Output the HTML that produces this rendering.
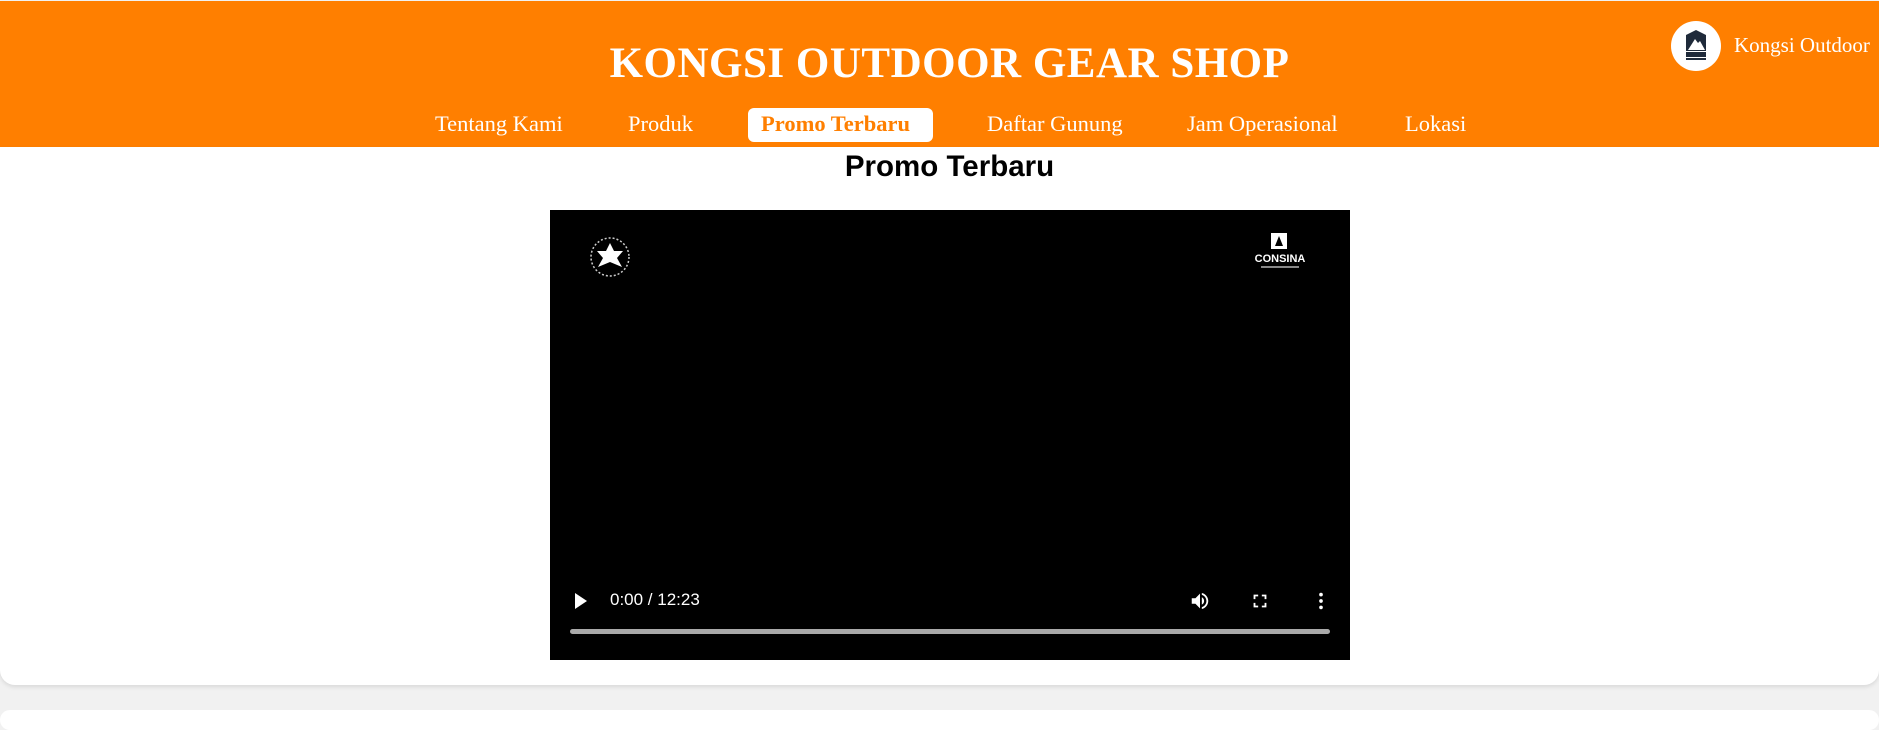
<!DOCTYPE html>
<html><head><meta charset="utf-8"><style>
html,body{margin:0;padding:0;width:1879px;height:715px;overflow:hidden;background:#f1f1f1;font-family:"Liberation Sans",sans-serif;}
.hdr{position:absolute;left:0;top:1px;width:1879px;height:146px;background:#ff7f00;}
.title{position:absolute;left:10px;width:1879px;top:38px;text-align:center;color:#fff;font-family:"Liberation Serif",serif;font-weight:bold;font-size:43px;letter-spacing:0.5px;}
.nav a{position:absolute;top:108px;color:#fff;font-family:"Liberation Serif",serif;font-size:22.5px;text-decoration:none;line-height:30px;}
.pill{position:absolute;left:748px;top:107px;width:185px;height:34px;background:#fff;border-radius:6px;}
.logo{position:absolute;left:1671px;top:20px;width:50px;height:50px;border-radius:50%;background:#fff;}
.brand{position:absolute;left:1734px;top:32px;color:#fff;font-family:"Liberation Serif",serif;font-size:21px;}
.card{position:absolute;left:0;top:147px;width:1879px;height:538px;background:#fff;border-radius:0 0 15px 15px;box-shadow:0 2px 4px rgba(0,0,0,.1);}
.card2{position:absolute;left:0;top:710px;width:1879px;height:20px;background:#fff;border-radius:15px;}
h2{position:absolute;left:10px;width:1879px;top:150px;margin:0;text-align:center;font-size:29.5px;font-weight:bold;color:#000;}
.vid{position:absolute;left:550px;top:210px;width:800px;height:450px;background:#000;}
.time{position:absolute;left:60px;top:380px;color:#fff;font-size:17px;}
.bar{position:absolute;left:20px;top:419px;width:760px;height:5px;background:#a9a9a9;border-radius:3px;}
</style></head><body>
<div class="hdr">
<div class="title">KONGSI OUTDOOR GEAR SHOP</div>
<div class="pill"></div>
<div class="nav">
<a style="left:435px">Tentang Kami</a>
<a style="left:628px">Produk</a>
<a style="left:761px;color:#ff7f00;font-weight:bold">Promo Terbaru</a>
<a style="left:987px">Daftar Gunung</a>
<a style="left:1187px">Jam Operasional</a>
<a style="left:1405px">Lokasi</a>
</div>
<div class="logo"><svg width="50" height="50" viewBox="0 0 50 50"><path d="M25 9 L35 14 L35 30 L15 30 L15 14 Z" fill="#1f2a3a"/><path d="M17 29 L24 18 L27 22 L29 20 L34 29Z" fill="#fff"/><rect x="15" y="31" width="20" height="5" fill="#1f2a3a"/><rect x="15" y="37" width="20" height="2" fill="#1f2a3a"/></svg></div>
<div class="brand">Kongsi Outdoor</div>
</div>
<div class="card"></div>
<div class="card2"></div>
<h2>Promo Terbaru</h2>
<div class="vid">
<svg style="position:absolute;left:38px;top:25px" width="44" height="44" viewBox="0 0 44 44"><circle cx="22" cy="22" r="19" fill="none" stroke="#ccc" stroke-width="1.5" stroke-dasharray="2 2"/><path d="M22 8 L26 16 L35 16 L29 23 L34 32 L22 27 L10 32 L15 23 L9 16 L18 16Z" fill="#fff"/></svg>
<svg style="position:absolute;left:705px;top:22px" width="50" height="42" viewBox="0 0 50 42"><rect x="16" y="1" width="16" height="16" fill="#fff"/><path d="M24 4 L28 14 L20 14Z" fill="#000"/><text x="25" y="30" fill="#fff" font-size="11" font-family="Liberation Sans" text-anchor="middle" font-weight="bold">CONSINA</text><rect x="6" y="34" width="38" height="2" fill="#888"/></svg>
<svg style="position:absolute;left:24px;top:382px" width="14" height="18" viewBox="0 0 14 18"><path d="M1 1 L13 9 L1 17Z" fill="#fff"/></svg>
<div class="time">0:00 / 12:23</div>
<svg style="position:absolute;left:639px;top:380px" width="22" height="22" viewBox="0 0 24 24"><path d="M3 9v6h4l5 5V4L7 9H3zm13.5 3c0-1.770-1-3.290-2.500-4.030v8.050c1.500-.73 2.500-2.250 2.500-4.020zM14 3.230v2.060c2.890.86 5 3.540 5 6.710s-2.110 5.850-5 6.710v2.060c4.010-.91 7-4.490 7-8.770s-2.990-7.860-7-8.770z" fill="#fff"/></svg>
<svg style="position:absolute;left:699px;top:380px" width="22" height="22" viewBox="0 0 24 24"><path d="M7 14H5v5h5v-2H7v-3zm-2-4h2V7h3V5H5v5zm12 7h-3v2h5v-5h-2v3zM14 5v2h3v3h2V5h-5z" fill="#fff"/></svg>
<svg style="position:absolute;left:760px;top:380px" width="22" height="22" viewBox="0 0 24 24"><circle cx="12" cy="5" r="2" fill="#fff"/><circle cx="12" cy="12" r="2" fill="#fff"/><circle cx="12" cy="19" r="2" fill="#fff"/></svg>
<div class="bar"></div>
</div>
</body></html>
